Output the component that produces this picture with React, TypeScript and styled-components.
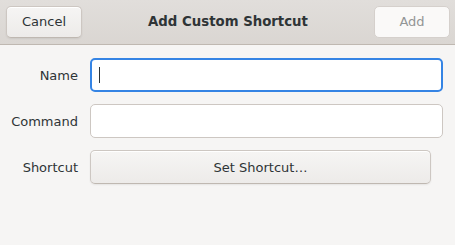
import React from 'react';
import styled, { createGlobalStyle } from 'styled-components';

const GlobalStyle = createGlobalStyle`
  html, body {
    margin: 0;
    padding: 0;
    background: #f6f5f4;
  }
  body {
    font-family: 'DejaVu Sans', sans-serif;
    font-size: 13px;
    color: #2e3436;
  }
`;

const Dialog = styled.div`
  width: 455px;
  height: 245px;
  display: flex;
  flex-direction: column;
  background: #f6f5f4;
`;

const HeaderBar = styled.div`
  height: 45px;
  box-sizing: border-box;
  display: flex;
  align-items: center;
  justify-content: space-between;
  padding: 0 5px 1px 6px;
  background: linear-gradient(to top, #dad6d2, #e1dedb);
  border-bottom: 1px solid #bfb8b1;
`;

const Title = styled.div`
  font-weight: bold;
  font-size: 13.3px;
  color: #2e3436;
`;

const HeaderButton = styled.button<{ $disabled?: boolean }>`
  width: 76px;
  height: 32px;
  box-sizing: border-box;
  font: inherit;
  border-radius: 5px;
  border: 1px solid ${(p) => (p.$disabled ? '#d5d0cc' : '#cdc7c2')};
  border-bottom-color: ${(p) => (p.$disabled ? '#d5d0cc' : '#bfb8b1')};
  background: ${(p) => (p.$disabled ? '#faf9f8' : 'linear-gradient(to top, #edebe9, #f6f5f4)')};
  color: ${(p) => (p.$disabled ? '#929595' : '#2e3436')};
  box-shadow: ${(p) => (p.$disabled ? 'none' : 'inset 0 1px #fff, 0 1px 2px rgba(0,0,0,0.07)')};
  padding: 0;
`;

const Form = styled.div`
  display: grid;
  grid-template-columns: 78px 353px;
  column-gap: 12px;
  row-gap: 12px;
  padding-top: 13px;
  align-items: center;
`;

const Label = styled.div`
  text-align: right;
`;

const Entry = styled.div<{ $focused?: boolean }>`
  height: 34px;
  box-sizing: border-box;
  border-radius: 5px;
  background: #fff;
  border: ${(p) => (p.$focused ? '2px solid #3584e4' : '1px solid #cdc7c2')};
  display: flex;
  align-items: center;
  padding-left: 7px;
`;

const Caret = styled.div`
  width: 1px;
  height: 16px;
  background: #2e3436;
`;

const ShortcutButton = styled.button`
  width: 341px;
  height: 34px;
  box-sizing: border-box;
  font: inherit;
  color: #2e3436;
  border-radius: 5px;
  border: 1px solid #cdc7c2;
  border-bottom-color: #bfb8b1;
  background: linear-gradient(to top, #edebe9, #f6f5f4);
  box-shadow: inset 0 1px #fff, 0 1px 2px rgba(0,0,0,0.07);
  padding: 0;
`;

export default function App() {
  return (
    <Dialog>
      <GlobalStyle />
      <HeaderBar>
        <HeaderButton>Cancel</HeaderButton>
        <Title>Add Custom Shortcut</Title>
        <HeaderButton $disabled>Add</HeaderButton>
      </HeaderBar>
      <Form>
        <Label>Name</Label>
        <Entry $focused>
          <Caret />
        </Entry>
        <Label>Command</Label>
        <Entry />
        <Label>Shortcut</Label>
        <ShortcutButton>Set Shortcut…</ShortcutButton>
      </Form>
    </Dialog>
  );
}
